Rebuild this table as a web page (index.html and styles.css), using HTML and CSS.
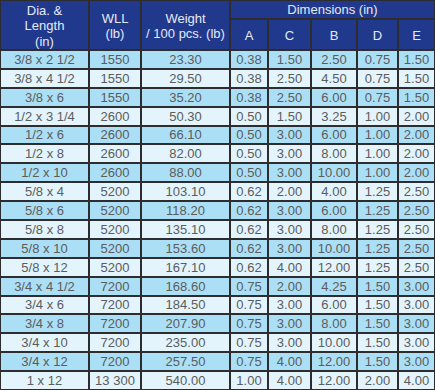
FILE: index.html
```html
<!DOCTYPE html>
<html>
<head>
<meta charset="utf-8">
<link rel="stylesheet" href="styles.css">
</head>
<body>
<div class="table">
  <div class="h span2">Dia. &amp;<br>Length<br>(in)</div>
  <div class="h span2">WLL<br>(lb)</div>
  <div class="h span2">Weight<br>/ 100 pcs. (lb)</div>
  <div class="h dims">Dimensions (in)</div>
  <div class="h">A</div>
  <div class="h">C</div>
  <div class="h">B</div>
  <div class="h">D</div>
  <div class="h">E</div>

  <div class="d">3/8 x 2 1/2</div><div class="d">1550</div><div class="d">23.30</div><div class="d">0.38</div><div class="d">1.50</div><div class="d">2.50</div><div class="d">0.75</div><div class="d">1.50</div>
  <div class="d alt">3/8 x 4 1/2</div><div class="d alt">1550</div><div class="d alt">29.50</div><div class="d alt">0.38</div><div class="d alt">2.50</div><div class="d alt">4.50</div><div class="d alt">0.75</div><div class="d alt">1.50</div>
  <div class="d">3/8 x 6</div><div class="d">1550</div><div class="d">35.20</div><div class="d">0.38</div><div class="d">2.50</div><div class="d">6.00</div><div class="d">0.75</div><div class="d">1.50</div>
  <div class="d alt">1/2 x 3 1/4</div><div class="d alt">2600</div><div class="d alt">50.30</div><div class="d alt">0.50</div><div class="d alt">1.50</div><div class="d alt">3.25</div><div class="d alt">1.00</div><div class="d alt">2.00</div>
  <div class="d">1/2 x 6</div><div class="d">2600</div><div class="d">66.10</div><div class="d">0.50</div><div class="d">3.00</div><div class="d">6.00</div><div class="d">1.00</div><div class="d">2.00</div>
  <div class="d alt">1/2 x 8</div><div class="d alt">2600</div><div class="d alt">82.00</div><div class="d alt">0.50</div><div class="d alt">3.00</div><div class="d alt">8.00</div><div class="d alt">1.00</div><div class="d alt">2.00</div>
  <div class="d">1/2 x 10</div><div class="d">2600</div><div class="d">88.00</div><div class="d">0.50</div><div class="d">3.00</div><div class="d">10.00</div><div class="d">1.00</div><div class="d">2.00</div>
  <div class="d alt">5/8 x 4</div><div class="d alt">5200</div><div class="d alt">103.10</div><div class="d alt">0.62</div><div class="d alt">2.00</div><div class="d alt">4.00</div><div class="d alt">1.25</div><div class="d alt">2.50</div>
  <div class="d">5/8 x 6</div><div class="d">5200</div><div class="d">118.20</div><div class="d">0.62</div><div class="d">3.00</div><div class="d">6.00</div><div class="d">1.25</div><div class="d">2.50</div>
  <div class="d alt">5/8 x 8</div><div class="d alt">5200</div><div class="d alt">135.10</div><div class="d alt">0.62</div><div class="d alt">3.00</div><div class="d alt">8.00</div><div class="d alt">1.25</div><div class="d alt">2.50</div>
  <div class="d">5/8 x 10</div><div class="d">5200</div><div class="d">153.60</div><div class="d">0.62</div><div class="d">3.00</div><div class="d">10.00</div><div class="d">1.25</div><div class="d">2.50</div>
  <div class="d alt">5/8 x 12</div><div class="d alt">5200</div><div class="d alt">167.10</div><div class="d alt">0.62</div><div class="d alt">4.00</div><div class="d alt">12.00</div><div class="d alt">1.25</div><div class="d alt">2.50</div>
  <div class="d">3/4 x 4 1/2</div><div class="d">7200</div><div class="d">168.60</div><div class="d">0.75</div><div class="d">2.00</div><div class="d">4.25</div><div class="d">1.50</div><div class="d">3.00</div>
  <div class="d alt">3/4 x 6</div><div class="d alt">7200</div><div class="d alt">184.50</div><div class="d alt">0.75</div><div class="d alt">3.00</div><div class="d alt">6.00</div><div class="d alt">1.50</div><div class="d alt">3.00</div>
  <div class="d">3/4 x 8</div><div class="d">7200</div><div class="d">207.90</div><div class="d">0.75</div><div class="d">3.00</div><div class="d">8.00</div><div class="d">1.50</div><div class="d">3.00</div>
  <div class="d alt">3/4 x 10</div><div class="d alt">7200</div><div class="d alt">235.00</div><div class="d alt">0.75</div><div class="d alt">3.00</div><div class="d alt">10.00</div><div class="d alt">1.50</div><div class="d alt">3.00</div>
  <div class="d">3/4 x 12</div><div class="d">7200</div><div class="d">257.50</div><div class="d">0.75</div><div class="d">4.00</div><div class="d">12.00</div><div class="d">1.50</div><div class="d">3.00</div>
  <div class="d alt">1 x 12</div><div class="d alt">13 300</div><div class="d alt">540.00</div><div class="d alt">1.00</div><div class="d alt">4.00</div><div class="d alt">12.00</div><div class="d alt">2.00</div><div class="d alt">4.00</div>
</div>
</body>
</html>
```
FILE: styles.css
```css
* { box-sizing: border-box; }
html, body { margin: 0; padding: 0; background: #ffffff; }
.table {
  width: 435px;
  height: 390px;
  display: grid;
  grid-template-columns: 87px 50px 87px 36px 41px 44px 39px 35px;
  grid-template-rows: 17px 29px repeat(18, 1fr);
  gap: 2px;
  padding: 1px;
  background: #2d2d2f;
  font-family: "Liberation Sans", Arial, sans-serif;
  font-size: 13px;
}
.h {
  background: #21398c;
  color: #e4e9f6;
  display: flex;
  align-items: center;
  justify-content: center;
  text-align: center;
  line-height: 15.5px;
  padding-top: 2px;
}
.span2 { grid-row: 1 / 3; }
.dims { grid-column: 4 / 9; padding-top: 0; }
.d {
  display: flex;
  align-items: center;
  justify-content: center;
  color: #5c5c5c;
  background: #abdff6;
  white-space: nowrap;
}
.d.alt { background: #e3f4fc; }
```
